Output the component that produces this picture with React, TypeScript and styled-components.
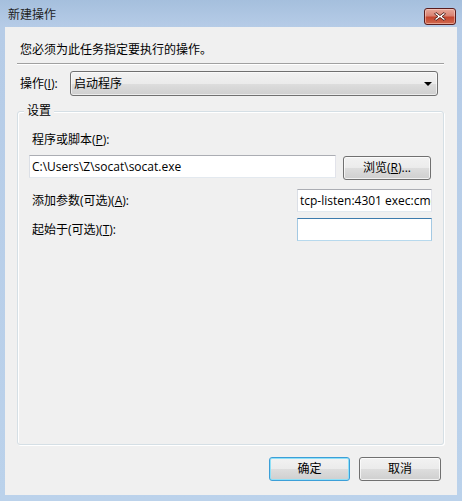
import React from 'react';
import styled, { createGlobalStyle } from 'styled-components';

const UI_FONT = `"Open Sans", "Noto Sans CJK SC", sans-serif`;

const Global = createGlobalStyle`
  html, body { margin: 0; padding: 0; }
  body {
    width: 462px;
    height: 501px;
    overflow: hidden;
    font-family: ${UI_FONT};
    font-size: 12px;
    color: #000;
  }
`;

const Window = styled.div`
  width: 462px;
  height: 501px;
  box-sizing: border-box;
  background: linear-gradient(to bottom, #a5bfdd 0px, #b6cce7 27px, #bbd2eb 100%);
  display: flex;
  flex-direction: column;
`;

const TitleBar = styled.div`
  height: 27px;
  flex: none;
  display: flex;
  align-items: flex-start;
  justify-content: space-between;
  padding: 0 6px 0 8px;
`;

const Title = styled.div`
  margin-top: 7px;
  line-height: 16px;
  font-size: 12px;
  color: #1e1e1e;
`;

const CloseButton = styled.div`
  margin-top: 8px;
  width: 32px;
  height: 17px;
  box-sizing: border-box;
  border: 1px solid #5a1d1d;
  border-radius: 3px;
  background: linear-gradient(to bottom, #e7a89a 0%, #d98272 45%, #c4452e 55%, #d06a4f 100%);
  box-shadow: inset 0 0 0 1px rgba(255, 220, 210, 0.5);
  display: flex;
  align-items: center;
  justify-content: center;
`;

const Client = styled.div`
  flex: 1;
  margin: 0 5px 6px;
  background: #f0f0f0;
  display: flex;
  flex-direction: column;
`;

const Instruction = styled.div`
  margin: 15px 0 0 15px;
  line-height: 16px;
  height: 16px;
`;

const Separator = styled.div`
  margin: 5px 13px 0 12px;
  height: 1px;
  background: #a0a0a0;
  border-bottom: 1px solid #ffffff;
`;

const ActionRow = styled.div`
  margin: 6px 19px 0 15px;
  height: 25px;
  display: flex;
  align-items: center;
`;

const ActionLabel = styled.div`
  width: 50px;
  flex: none;
  line-height: 16px;
`;

const Combo = styled.div`
  flex: 1;
  height: 25px;
  box-sizing: border-box;
  border: 1px solid #707070;
  border-radius: 3px;
  background: linear-gradient(to bottom, #f2f2f2 0%, #ebebeb 50%, #dddddd 51%, #cfcfcf 100%);
  box-shadow: inset 0 0 0 1px rgba(255, 255, 255, 0.6);
  display: flex;
  align-items: center;
  justify-content: space-between;
  padding: 0 5px 0 3px;
`;

const ComboText = styled.span`
  line-height: 16px;
`;

const Arrow = styled.span`
  width: 0;
  height: 0;
  border-left: 4px solid transparent;
  border-right: 4px solid transparent;
  border-top: 4px solid #000;
`;

const Group = styled.div`
  position: relative;
  margin: 15px 13px 0 12px;
  height: 334px;
  box-sizing: border-box;
  border: 1px solid #d5dfe5;
  border-radius: 3px;
  box-shadow: 1px 1px 0 #ffffff, inset 1px 1px 0 #ffffff;
  display: flex;
  flex-direction: column;
  padding: 20px 11px 0 11px;
`;

const GroupTitle = styled.div`
  position: absolute;
  top: -9px;
  left: 6px;
  padding: 0 3px;
  background: #f0f0f0;
  line-height: 16px;
`;

const FieldLabel = styled.div`
  padding-left: 3px;
  line-height: 16px;
`;

const PathRow = styled.div`
  margin-top: 7px;
  display: flex;
  align-items: flex-start;
  gap: 7px;
`;

const TextBox = styled.div<{ $width: number; $hot?: boolean }>`
  width: ${(p) => p.$width}px;
  height: 23px;
  flex: none;
  box-sizing: border-box;
  background: #ffffff;
  border: 1px solid;
  border-color: ${(p) =>
    p.$hot ? '#3d7bad #a4c9e3 #b7d9ed #a4c9e3' : '#abadb3 #e2e3ea #e3e9ef #dbdfe6'};
  padding: 0 2px;
  display: flex;
  align-items: center;
  overflow: hidden;
  white-space: nowrap;
  line-height: 16px;
`;

const Button = styled.div<{ $width: number; $default?: boolean; $offset?: number }>`
  width: ${(p) => p.$width}px;
  height: 24px;
  flex: none;
  margin-top: ${(p) => p.$offset ?? 0}px;
  box-sizing: border-box;
  border: 1px solid ${(p) => (p.$default ? '#3c9fd8' : '#707070')};
  border-radius: 3px;
  background: linear-gradient(to bottom, #f2f2f2 0%, #ebebeb 50%, #dddddd 51%, #cfcfcf 100%);
  box-shadow: inset 0 0 0 1px ${(p) => (p.$default ? '#8fe0f7' : 'rgba(255,255,255,0.7)')};
  display: flex;
  align-items: center;
  justify-content: center;
  line-height: 16px;
`;

const ParamRow = styled.div<{ $top: number }>`
  margin-top: ${(p) => p.$top}px;
  display: flex;
  align-items: center;
  justify-content: space-between;
`;

const Footer = styled.div`
  margin: 12px 16px 0 0;
  display: flex;
  justify-content: flex-end;
  gap: 9px;
`;

const U = styled.span`
  text-decoration: underline;
`;

export default function App() {
  return (
    <>
      <Global />
      <Window>
        <TitleBar>
          <Title>新建操作</Title>
          <CloseButton>
            <svg width="14" height="11" viewBox="0 0 14 11">
              <path
                d="M3 1.5 L7 4.5 L11 1.5 L12.5 3 L9 5.5 L12.5 8 L11 9.5 L7 6.5 L3 9.5 L1.5 8 L5 5.5 L1.5 3 Z"
                fill="#ffffff"
                stroke="#4a1a14"
                strokeWidth="0.9"
                strokeLinejoin="round"
              />
            </svg>
          </CloseButton>
        </TitleBar>
        <Client>
          <Instruction>您必须为此任务指定要执行的操作。</Instruction>
          <Separator />
          <ActionRow>
            <ActionLabel>
              操作(<U>I</U>):
            </ActionLabel>
            <Combo>
              <ComboText>启动程序</ComboText>
              <Arrow />
            </Combo>
          </ActionRow>
          <Group>
            <GroupTitle>设置</GroupTitle>
            <FieldLabel>
              程序或脚本(<U>P</U>):
            </FieldLabel>
            <PathRow>
              <TextBox $width={307}>C:\Users\Z\socat\socat.exe</TextBox>
              <Button $width={88} $offset={1}>
                浏览(<U>R</U>)...
              </Button>
            </PathRow>
            <ParamRow $top={9}>
              <FieldLabel>
                添加参数(可选)(<U>A</U>):
              </FieldLabel>
              <TextBox $width={135}>tcp-listen:4301 exec:cmd.exe,pipes</TextBox>
            </ParamRow>
            <ParamRow $top={6}>
              <FieldLabel>
                起始于(可选)(<U>T</U>):
              </FieldLabel>
              <TextBox $width={135} $hot />
            </ParamRow>
          </Group>
          <Footer>
            <Button $width={81} $default>
              确定
            </Button>
            <Button $width={82}>取消</Button>
          </Footer>
        </Client>
      </Window>
    </>
  );
}
